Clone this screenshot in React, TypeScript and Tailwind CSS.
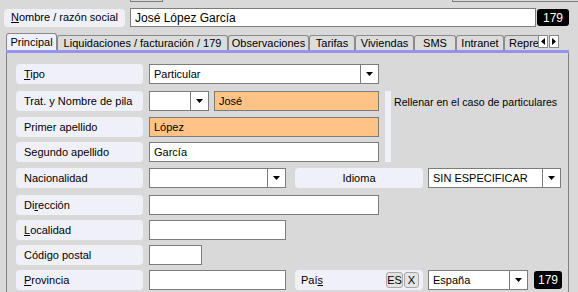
import React from "react";

const tabs = [
  { label: "Principal", w: "w-[51px]", active: true },
  { label: "Liquidaciones / facturación / 179", w: "w-[171px]" },
  { label: "Observaciones", w: "w-[81px]" },
  { label: "Tarifas", w: "w-[46px]" },
  { label: "Viviendas", w: "w-[59px]" },
  { label: "SMS", w: "w-[42px]" },
  { label: "Intranet", w: "w-[48px]" },
];

function Label({ children, className = "" }: { children: React.ReactNode; className?: string }) {
  return (
    <div className={`flex h-5 w-[127px] shrink-0 items-center rounded-[4px] bg-[#f0f0f9] pl-[8px] ${className}`}>
      {children}
    </div>
  );
}

function Input({ value = "", w, orange = false, className = "" }: { value?: string; w: string; orange?: boolean; className?: string }) {
  return (
    <div
      className={`flex h-5 shrink-0 items-center border border-[#7c7c7c] pl-[4px] ${w} ${orange ? "bg-[#ffc386]" : "bg-white"} ${className}`}
    >
      {value}
    </div>
  );
}

function Arrow() {
  return (
    <svg width="7" height="4" viewBox="0 0 7 4">
      <path d="M0 0h7L3.5 4z" fill="#000" />
    </svg>
  );
}

function Select({ value = "", w, className = "" }: { value?: string; w: string; className?: string }) {
  return (
    <div className={`flex h-5 shrink-0 border border-[#7c7c7c] bg-white ${w} ${className}`}>
      <div className="flex flex-1 items-center overflow-hidden pl-[4px]">{value}</div>
      <div className="flex w-[18px] items-center justify-center border-l border-[#7c7c7c]">
        <Arrow />
      </div>
    </div>
  );
}

function Badge({ className = "" }: { className?: string }) {
  return (
    <div className={`flex items-center justify-center rounded-[3px] bg-black text-[12px] text-white ${className}`}>
      179
    </div>
  );
}

export default function App() {
  return (
    <div className="h-[292px] w-[578px] overflow-hidden bg-[#d9d9d9] font-['Liberation_Sans',Arial,sans-serif] text-[11px] leading-none text-black">
      {/* inputs cut off above */}
      <div className="flex h-[2px]">
        <div className="ml-[130px] w-[33px] border-x border-b border-[#7c7c7c]" />
        <div className="ml-[289px] flex-1 border-b border-l border-[#7c7c7c]" />
      </div>

      <div className="mt-[6px] flex items-center">
        <div className="ml-[4px] flex h-[18px] w-[121px] items-center rounded-[4px] bg-[#f0f0f9] pl-[7px]">
          <span><u className="underline-offset-1">N</u>ombre / razón social</span>
        </div>
        <div className="ml-[5px] flex h-[19px] w-[406px] items-center border border-[#7c7c7c] bg-white pl-[4px] text-[12px]">
          José López García
        </div>
        <Badge className="ml-[1px] h-[17px] w-[32px]" />
      </div>

      {/* tab strip */}
      <div className="mt-[6px] flex h-[17px] items-end pl-[6px]">
        {tabs.map((t) => (
          <div
            key={t.label}
            className={`flex shrink-0 items-center justify-center rounded-t-[3px] border-x border-t border-[#8a8a8a] ${t.w} ${
              t.active ? "h-[17px] bg-[#eef0fc]" : "h-[15px] bg-[#dcdcdc]"
            }`}
          >
            {t.label}
          </div>
        ))}
        <div className="flex h-[15px] w-[34px] shrink-0 items-center overflow-hidden rounded-tl-[3px] border-l border-t border-[#8a8a8a] pl-[4px]">
          Repre
        </div>
        <div className="mb-[2px] flex h-[13px] shrink-0">
          <div className="flex w-[10px] items-center justify-center border border-[#8a8a8a] bg-white">
            <svg width="4" height="7" viewBox="0 0 4 7"><path d="M4 0v7L0 3.5z" fill="#000" /></svg>
          </div>
          <div className="ml-[1px] flex w-[10px] items-center justify-center border border-[#8a8a8a] bg-white">
            <svg width="4" height="7" viewBox="0 0 4 7"><path d="M0 0v7l4-3.5z" fill="#000" /></svg>
          </div>
        </div>
      </div>
      <div className="ml-[6px] h-[3px] w-[563px] bg-[#9494ec]" />

      {/* panel */}
      <div className="ml-[6px] h-[240px] w-[563px] border-x border-[#808080] pl-[9px] pt-[11px]">
        <div className="flex">
          <Label><span><u>T</u>ipo</span></Label>
          <Select value="Particular" w="w-[230px]" className="ml-[6px]" />
        </div>

        <div className="mt-[7px] flex">
          <div className="flex flex-col">
            <div className="flex">
              <Label>Trat. y Nombre de pila</Label>
              <Select w="w-[60px]" className="ml-[6px]" />
              <Input value="José" w="w-[165px]" orange className="ml-[5px]" />
            </div>
            <div className="mt-[6px] flex">
              <Label>Primer apellido</Label>
              <Input value="López" w="w-[230px]" orange className="ml-[6px]" />
            </div>
            <div className="mt-[5px] flex">
              <Label>Segundo apellido</Label>
              <Input value="García" w="w-[230px]" className="ml-[6px]" />
            </div>
          </div>
          <div className="ml-[6px] w-[6px] bg-[#f0f0f9]" />
          <div className="ml-[3px] pt-[6px] text-[10.6px]">Rellenar en el caso de particulares</div>
        </div>

        <div className="mt-[6px] flex">
          <Label>Nacionalidad</Label>
          <Select w="w-[137px]" className="ml-[6px]" />
          <div className="ml-[9px] flex h-5 w-[128px] items-center justify-center rounded-[4px] bg-[#f0f0f9]">
            Idioma
          </div>
          <Select value="SIN ESPECIFICAR" w="w-[133px]" className="ml-[5px]" />
        </div>

        <div className="mt-[7px] flex">
          <Label><span>Di<u>r</u>ección</span></Label>
          <Input w="w-[230px]" className="ml-[6px]" />
        </div>

        <div className="mt-[5px] flex">
          <Label><span><u>L</u>ocalidad</span></Label>
          <Input w="w-[137px]" className="ml-[6px]" />
        </div>

        <div className="mt-[5px] flex">
          <Label><span>Códi<u>g</u>o postal</span></Label>
          <Input w="w-[53px]" className="ml-[6px]" />
        </div>

        <div className="mt-[5px] flex items-center">
          <Label><span><u>P</u>rovincia</span></Label>
          <Input w="w-[137px]" className="ml-[6px]" />
          <div className="ml-[9px] flex h-5 w-[128px] items-center rounded-[4px] bg-[#f0f0f9] pl-[6px] pr-[4px]">
            <span className="flex-1">Paí<u>s</u></span>
            <div className="flex h-[16px] w-[17px] items-center justify-center rounded-[3px] border border-[#a8a8a8] bg-[#e4e4e4]">ES</div>
            <div className="ml-[1px] flex h-[16px] w-[15px] items-center justify-center rounded-[3px] border border-[#a8a8a8] bg-[#e4e4e4]">X</div>
          </div>
          <Select value="España" w="w-[100px]" className="ml-[5px]" />
          <Badge className="ml-[6px] h-[18px] w-[28px]" />
        </div>
      </div>
    </div>
  );
}
